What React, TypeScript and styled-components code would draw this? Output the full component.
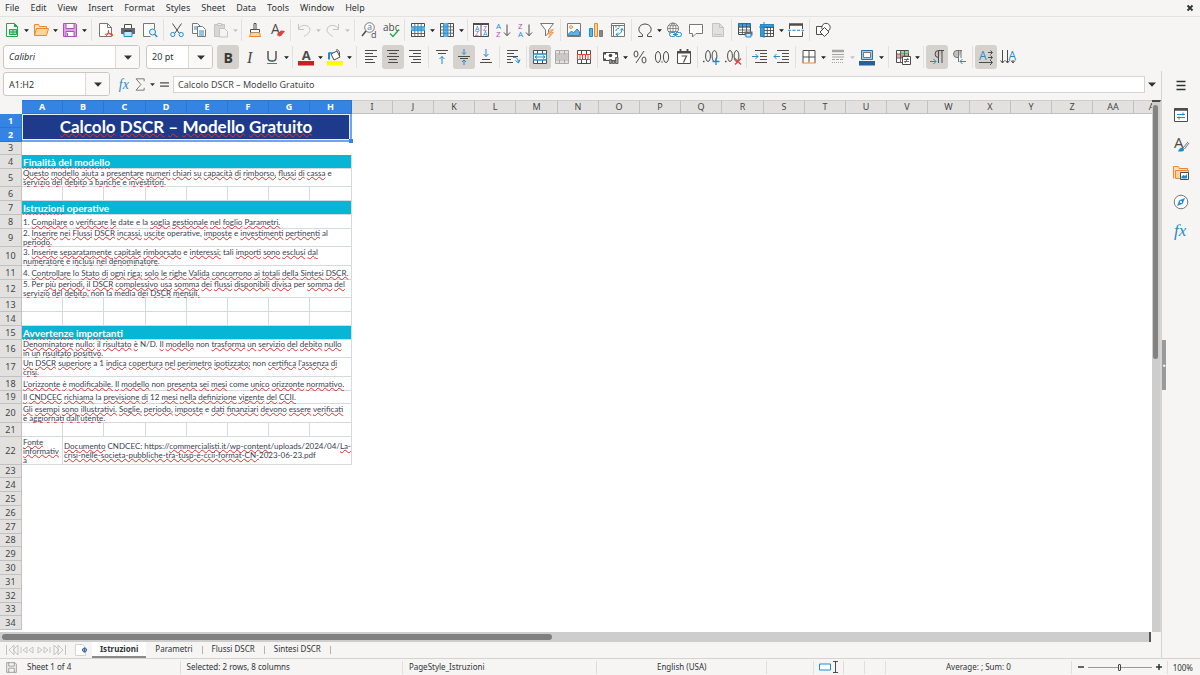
import React from "react";
import styled, { createGlobalStyle, css } from "styled-components";

const BLUE = "#1e8bcd";
const INK = "#4d4c4a";
const GREY = "#797774";
const PALE = "#c4c3c1";
const ORANGE = "#ed8733";
const RED = "#e0403e";
const GREEN = "#18ab50";
const PURPLE = "#b04fbe";

const Global = createGlobalStyle`
  *, *::before, *::after { box-sizing: border-box; }
  body { margin: 0; background: #f6f5f4; }
  button, select, input { font: inherit; color: inherit; margin: 0; padding: 0; }
`;

const Window = styled.div`
  display: flex;
  flex-direction: column;
  height: 100vh;
  overflow: hidden;
  background: #f6f5f4;
  color: #2e3436;
  font: 9px/16px "Noto Sans", sans-serif;
`;

/* ---------- menu bar ---------- */
const MenuBar = styled.nav`
  display: flex;
  flex: none;
  gap: 1px;
  height: 17px;
  padding: 0 6px 0 0;
  border-bottom: 1px solid #e4e3e1;
`;
const MenuItem = styled.button`
  padding: 0 5px;
  border: 0;
  background: none;
  line-height: 16px;
`;
const CloseButton = styled.button`
  display: flex;
  align-items: center;
  margin-left: auto;
  border: 0;
  background: none;
`;

/* ---------- toolbars ---------- */
const Toolbar = styled.div`
  display: flex;
  flex: none;
  align-items: center;
  height: 26px;
  padding: 0 1px;
`;
const ToolButton = styled.button<{ $on?: boolean }>`
  display: flex;
  flex: none;
  align-items: center;
  justify-content: center;
  width: 22px;
  height: 24px;
  border: 0;
  border-radius: 3px;
  background: ${(p) => (p.$on ? "#d5d1cd" : "none")};
`;
const DropButton = styled.button<{ $dim?: boolean }>`
  display: flex;
  flex: none;
  align-items: center;
  justify-content: center;
  width: 7px;
  height: 24px;
  border: 0;
  background: none;
  color: ${(p) => (p.$dim ? PALE : "#1c1c1c")};
`;
const Separator = styled.span<{ $wide?: boolean }>`
  flex: none;
  width: 1px;
  height: 22px;
  margin: 0 ${(p) => (p.$wide ? 3 : 2)}px;
  background: #e3e1df;
`;
const Combo = styled.div<{ $w: number }>`
  display: flex;
  flex: none;
  align-items: center;
  width: ${(p) => p.$w}px;
  height: 24px;
  border: 1px solid #cdc7c2;
  border-radius: 3px;
  background: #fff;
  overflow: hidden;
`;
const ComboSelect = styled.select<{ $italic?: boolean }>`
  flex: 1;
  min-width: 0;
  height: 22px;
  padding: 0 0 0 5px;
  border: 0;
  appearance: none;
  background: none;
  line-height: 22px;
  font-style: ${(p) => (p.$italic ? "italic" : "normal")};
`;
const ComboInput = styled.input`
  flex: 1;
  min-width: 0;
  height: 22px;
  padding: 0 0 0 5px;
  border: 0;
  background: none;
`;
const ComboArrow = styled.span`
  display: flex;
  align-items: center;
  justify-content: center;
  width: 24px;
  height: 22px;
  border-left: 1px solid #dcd8d4;
  background: #faf9f8;
`;
const FormatBar = styled(Toolbar)`
  height: 28px;
  padding: 0 3px;
`;
const ComboGroup = styled.div`
  display: flex;
  gap: 6px;
  padding-right: 4px;
`;

/* ---------- body ---------- */
const Body = styled.div`
  display: flex;
  flex: 1;
  min-height: 0;
`;
const Main = styled.main`
  display: flex;
  flex: 1;
  flex-direction: column;
  min-width: 0;
`;
const FormulaBar = styled.div`
  display: flex;
  flex: none;
  align-items: center;
  height: 29px;
  padding: 0 5px 3px 3px;
`;
const FormulaTools = styled.div`
  display: flex;
  align-items: center;
  gap: 3px;
  padding: 0 2px 0 8px;
`;
const PlainButton = styled.button`
  display: flex;
  align-items: center;
  justify-content: center;
  border: 0;
  background: none;
`;
const FormulaInput = styled.input`
  flex: 1;
  min-width: 0;
  height: 17px;
  margin-right: 3px;
  padding: 0 4px;
  border: 1px solid #d6d3d0;
  background: #fff;
  color: #444;
`;

const SheetArea = styled.div`
  display: flex;
  flex: 1;
  min-height: 0;
`;
const SheetViewport = styled.div`
  flex: 1;
  min-width: 0;
  overflow: hidden;
  background: #fff;
`;
const Sheet = styled.table`
  table-layout: fixed;
  width: 1176px;
  border-spacing: 0;
  border-collapse: separate;
`;
const headCell = css<{ $on?: boolean }>`
  padding: 0;
  overflow: hidden;
  text-align: center;
  font-weight: ${(p) => (p.$on ? 700 : 400)};
  font-size: 9px;
  background: ${(p) => (p.$on ? "#3584e4" : "#e2e1e0")};
  color: ${(p) => (p.$on ? "#fff" : "#444")};
  border-right: 1px solid ${(p) => (p.$on ? "#2c76d0" : "#c2c1c0")};
  border-bottom: 1px solid ${(p) => (p.$on ? "#2c76d0" : "#c2c1c0")};
`;
const ColHead = styled.th`
  ${headCell}
  height: 14px;
  line-height: 12px;
  border-top: 1px solid ${(p: { $on?: boolean }) => (p.$on ? "#2c76d0" : "#cfcecd")};
`;
const RowHead = styled.th`
  ${headCell}
  line-height: 12px;
`;
const Corner = styled.td`
  padding: 0;
  background: #f6f5f4;
`;
const Row = styled.tr<{ $h: number }>`
  height: ${(p) => p.$h}px;
`;
/* grid lines are inset shadows so that they take no room from the text */
const Cell = styled.td`
  padding: 0 0 0 1px;
  overflow: hidden;
  vertical-align: middle;
  white-space: pre;
  font: 8px/9px Lato, sans-serif;
  color: #374151;
  box-shadow: inset -1px -1px #d6d9de;
`;
const SectionCell = styled(Cell)`
  background: #06b6d4;
  color: #fff;
  font: 700 10px/13px Lato, sans-serif;
`;
const TitleCell = styled.td`
  position: relative;
  padding: 0;
  text-align: center;
  background: #1e3a8a;
  color: #fff;
  font: 700 17px/22px Lato, sans-serif;
  border-right: 2px solid #6ea6ec;
  border-bottom: 2px solid #6ea6ec;
  box-shadow: inset 0 0 0 1px #e8f0fc;
`;
const FillHandle = styled.span`
  position: absolute;
  right: -3px;
  bottom: -3px;
  width: 4px;
  height: 4px;
  background: #3584e4;
`;
const Misspelt = styled.span`
  text-decoration: underline wavy #e0302e 1px;
  text-underline-offset: 0;
  text-decoration-skip-ink: none;
`;

const VScroll = styled.div`
  flex: none;
  width: 9px;
  padding: 1px 2px 0 1px;
  background: #cdcdcd;
  border-top: 2px solid #4a4a4a;
  border-right: 1px solid #d8d6d4;
`;
const VThumb = styled.div`
  height: 48%;
  margin-top: 2px;
  border-radius: 3px;
  background: #828282;
`;
const HScroll = styled.div`
  flex: none;
  height: 10px;
  margin-right: 10px;
  padding: 2px;
  background: #cdcdcd;
  border-right: 2px solid #555;
`;
const HThumb = styled.div`
  width: 48%;
  height: 6px;
  border-radius: 3px;
  background: #7f7f7f;
`;
const TabBar = styled.div`
  display: flex;
  flex: none;
  align-items: center;
  height: 16px;
  padding-left: 6px;
  font-size: 8px;
`;
const AddSheet = styled(PlainButton)`
  margin: 0 4px 0 8px;
`;
const Tab = styled.button<{ $on?: boolean }>`
  height: 16px;
  padding: 0 ${(p) => (p.$on ? 8 : 9)}px;
  border: 0;
  border-bottom: 2px solid ${(p) => (p.$on ? "#8a8a8a" : "transparent")};
  background: ${(p) => (p.$on ? "#fff" : "none")};
  font-weight: ${(p) => (p.$on ? 700 : 400)};
  line-height: 14px;
`;
const TabDivider = styled.span`
  width: 1px;
  height: 8px;
  background: #b5b3b1;
`;

/* ---------- sidebar ---------- */
const SideBar = styled.aside`
  display: flex;
  flex: none;
  width: 39px;
  border-left: 1px solid #d5d3d1;
`;
const SideHandle = styled.button`
  align-self: center;
  width: 4px;
  height: 50px;
  border: 0;
  background: #9a9a9a;
  color: #fff;
  font-size: 5px;
  line-height: 50px;
`;
const SideTabs = styled.div`
  display: flex;
  flex: 1;
  flex-direction: column;
  align-items: center;
  gap: 13px;
  padding: 7px 4px 0 0;
`;

/* ---------- status bar ---------- */
const StatusBar = styled.footer`
  display: flex;
  flex: none;
  align-items: center;
  height: 17px;
  border-top: 1px solid #d5d3d1;
  font-size: 8px;
`;
const StatusCell = styled.div<{ $grow: number; $center?: boolean }>`
  display: flex;
  align-items: center;
  gap: 10px;
  justify-content: ${(p) => (p.$center ? "center" : "flex-start")};
  flex: ${(p) => p.$grow} 1 0;
  min-width: 0;
  height: 13px;
  padding-left: ${(p) => (p.$center ? 0 : 6)}px;
  border-right: 1px solid #e0dedc;
  white-space: nowrap;
`;
const ZoomControls = styled.div`
  display: flex;
  align-items: center;
  gap: 3px;
  padding: 0 7px 0 5px;
`;
const ZoomSlider = styled.input`
  width: 64px;
  height: 12px;
  appearance: none;
  background: linear-gradient(#9a9996, #9a9996) center / 100% 1px no-repeat;
  &::-webkit-slider-thumb {
    appearance: none;
    width: 3px;
    height: 7px;
    border: 1px solid #444;
    border-radius: 1px;
    background: #f6f5f4;
  }
`;
const ZoomValue = styled.span`
  margin-left: 1px;
  padding-left: 5px;
  border-left: 1px solid #e0dedc;
  line-height: 13px;
`;

/* ---------- icons ---------- */
const Svg = styled.svg`
  display: block;
  flex: none;
  fill: none;
  stroke: ${INK};
  stroke-width: 1;
  overflow: visible;
`;
const Icon = ({ children, size = 16 }: { children: React.ReactNode; size?: number }) => (
  <Svg width={size} height={size} viewBox="0 0 16 16" aria-hidden="true">
    {children}
  </Svg>
);
const Caret = ({ big }: { big?: boolean }) => (
  <Svg width={big ? 8 : 5} height={big ? 5 : 3} viewBox="0 0 8 5" aria-hidden="true">
    <path d="M0 0.5h8L4 4.8z" fill="currentColor" stroke="none" />
  </Svg>
);
const T = (p: { x: number; y: number; s: number; c: string; b?: boolean; serif?: boolean; i?: boolean; children: string }) => (
  <text
    x={p.x}
    y={p.y}
    fontSize={p.s}
    fill={p.c}
    stroke="none"
    fontWeight={p.b ? 700 : 400}
    fontStyle={p.i ? "italic" : "normal"}
    fontFamily={p.serif ? '"Liberation Serif", serif' : '"Open Sans", sans-serif'}
  >
    {p.children}
  </text>
);
const page = "M1.5 1.5h8l4 4v9h-12z";

const icons: Record<string, React.ReactNode> = {
  new: (
    <>
      <path d="M2.500 1.500h8l3 3v10h-11z" fill="#fff" stroke={GREEN} />
      <path d="M10 1l4 4h-4z" fill={GREEN} stroke="none" />
      <path d="M5.500 7.500h7v5h-7zM5.500 10h7M9 7.500v5" fill="#a9e0bb" stroke={GREEN} />
    </>
  ),
  open: (
    <>
      <path d="M1.500 13.500v-11h4l1 2h7v2" fill="#fbe3bd" stroke={ORANGE} />
      <path d="M3.500 6.500h12l-2 7h-12z" fill="#fbd69b" stroke={ORANGE} />
    </>
  ),
  save: (
    <>
      <path d="M1.500 1.500h12l1 1v12h-13z" fill="#dd9fe6" stroke={PURPLE} />
      <path d="M4 1.500h8v5H4z" fill="#fff" stroke={PURPLE} />
      <path d="M4 9.500h8v5H4z" fill="#fff" stroke={PURPLE} />
      <path d="M5.500 11v3" stroke={PURPLE} />
    </>
  ),
  pdf: (
    <>
      <path d={page} fill="#fff" stroke={GREY} />
      <path d="M9.500 1.500v4h4" stroke={GREY} />
      <path d="M7 15c3-2 4-6 3.500-7M7 12.500c2-1 6-1 8 0M10 9c.5 2 3 4 5 5" stroke={RED} />
    </>
  ),
  print: (
    <>
      <path d="M4.500 6V2.500h7V6" fill="#fff" />
      <path d="M1 6h14v6H1z" fill="#6a6967" stroke="none" />
      <path d="M4 9.500h8v5H4z" fill="#cfe5f5" stroke={BLUE} />
      <path d="M4 9h8" stroke="#333" />
    </>
  ),
  preview: (
    <>
      <path d="M12.500 7V1.500h-11v13h7" fill="#fff" stroke={GREY} />
      <circle cx="10.500" cy="10" r="3" fill="#e5f2fb" stroke={BLUE} />
      <path d="M12.700 12.300l2.500 2.700" stroke={BLUE} strokeWidth="1.400" />
    </>
  ),
  cut: (
    <>
      <path d="M3.500 1.500l6.500 9.500M12.500 1.500l-6.500 9.500" />
      <circle cx="3.800" cy="12.500" r="2.100" stroke={BLUE} />
      <circle cx="12.200" cy="12.500" r="2.100" stroke={BLUE} />
    </>
  ),
  copy: (
    <>
      <path d="M8 11.500H1.500v-10h5l3 3" fill="#fff" stroke={GREY} />
      <path d="M6.500 4.500h5l3 3v7h-8z" fill="#fff" stroke={GREY} />
      <path d="M3 5h3M3 7h3M8 9h5M8 11h5M8 13h5" stroke={BLUE} />
    </>
  ),
  paste: (
    <>
      <path d="M1.500 2.500h10v12h-10z" fill="#d8d7d5" stroke={PALE} />
      <path d="M4.500 1.500h4v2h-4z" fill="#eee" stroke={PALE} />
      <path d="M6.500 6.500h5l3 3v5.500h-8z" fill="#f4f4f3" stroke={PALE} />
    </>
  ),
  brush: (
    <>
      <path d="M7 1.500h2v6H7z" fill="#fff" />
      <path d="M3.500 7.500h9v3h-9z" fill="#fff" />
      <path d="M4 10.500l-1.500 4h11l-1-4" fill="#fbd69b" stroke={ORANGE} />
    </>
  ),
  clear: (
    <>
      <T x={2} y={12} s={14} c={INK}>A</T>
      <path d="M8 12l4-3.500 4 .5-4 5H9z" fill={RED} stroke="none" />
      <path d="M8 13l3 2" stroke="#f4a3a2" />
    </>
  ),
  undo: <path d="M2.500 2v5.500h5.500M2.500 7.500c1-5 10.500-6 11.500 0 .3 2.500-2 4.500-6 7" stroke={PALE} />,
  redo: <path d="M13.500 2v5.500H8M13.500 7.500C12.500 2.500 3 1.500 2 7.500c-.3 2.500 2 4.500 6 7" stroke={PALE} />,
  find: (
    <>
      <circle cx="8.500" cy="5.500" r="4.800" fill="#fff" stroke={GREY} />
      <T x={6} y={8} s={9} c={BLUE}>a</T>
      <path d="M5 9L1 14" strokeWidth="1.500" />
      <T x={10} y={15.500} s={9} c={INK}>d</T>
    </>
  ),
  spell: (
    <>
      <T x={0} y={8.500} s={10} c={INK}>abc</T>
      <path d="M7 11.500l3 3 6-7" stroke={GREEN} strokeWidth="1.300" />
    </>
  ),
  row: (
    <>
      <path d="M1.500 1.500h13v13h-13z" fill="#fff" />
      <path d="M4.800 1.500v13M8 1.500v13M11.200 1.500v13M1.500 11.500h13M1.500 14.500h13" strokeWidth=".8" />
      <path d="M1 4.700h14v4h-14z" fill="#63b1e5" stroke="none" />
      <path d="M4.800 4.700v4M8 4.700v4M11.200 4.700v4M1 4.700h14M1 8.700h14" stroke={BLUE} strokeWidth=".8" />
    </>
  ),
  col: (
    <>
      <path d="M1.500 1.500h13v13h-13z" fill="#fff" />
      <path d="M1.500 4.800h13M1.500 8h13M1.500 11.200h13M11.500 1.500v13" strokeWidth=".8" />
      <path d="M4.500 1h4.500v14h-4.500z" fill="#63b1e5" stroke="none" />
      <path d="M4.500 4.800h4.500M4.500 8h4.500M4.500 11.200h4.500M4.500 1v14M9 1v14" stroke={BLUE} strokeWidth=".8" />
    </>
  ),
  sort: (
    <>
      <path d="M.5 1.500h15v13H.5zM8 3v11.500" fill="#fff" />
      <path d="M0 2h16" strokeWidth="2" />
      <T x={2} y={8.500} s={7} c={BLUE}>A</T>
      <T x={2} y={14} s={7} c={PURPLE}>Z</T>
      <T x={10} y={8.500} s={7} c={PURPLE}>Z</T>
      <T x={10} y={14} s={7} c={BLUE}>A</T>
    </>
  ),
  asc: (
    <>
      <T x={1} y={7} s={8} c={BLUE}>A</T>
      <T x={1} y={15} s={8} c={PURPLE}>Z</T>
      <path d="M12 2.500v11M9 10.500l3 3.200 3-3.200" />
    </>
  ),
  desc: (
    <>
      <T x={1} y={7} s={8} c={PURPLE}>Z</T>
      <T x={1} y={15} s={8} c={BLUE}>A</T>
      <path d="M12 2.500v11M9 10.500l3 3.200 3-3.200" />
    </>
  ),
  filter: (
    <>
      <path d="M1.500 1.500h13L9.500 8v3l-3 3V8z" fill="#fff" stroke={GREY} />
      <path d="M11.500 8l-3 4h3l-2 4 5-5.500h-3l3-3z" fill="#fbc780" stroke={ORANGE} strokeWidth=".7" />
    </>
  ),
  image: (
    <>
      <path d="M1.500 1.500h13v13h-13z" fill="#fff" stroke={GREY} />
      <circle cx="5" cy="5" r="1.400" stroke={ORANGE} />
      <path d="M2.500 13.500V12l3-3 2 2 3.500-4 2.500 3v3.500z" fill="#63b1e5" stroke={BLUE} />
    </>
  ),
  chart: (
    <>
      <path d="M1.500 6.500h3v8h-3z" fill="#63b1e5" stroke={BLUE} />
      <path d="M6.500 1.500h3v13h-3z" fill="#fbd69b" stroke={ORANGE} />
      <path d="M11.500 8.500h3v6h-3z" fill="#8a8987" stroke={GREY} />
    </>
  ),
  pivot: (
    <>
      <path d="M1.500 1.500h13v13h-13z" fill="#fff" stroke={GREY} />
      <path d="M2 3.500h12M3.500 4v10M6 3.500v2M9 3.500v2" stroke={GREY} />
      <path d="M6 12.500c4 0 6-2 6-6M6 12.500l2-2M6 12.500l2 1.500M12 6.500l-2 2M12 6.500l1.500 2M6 9c0-2 1-2.500 3-2.500" stroke={BLUE} />
    </>
  ),
  omega: <path d="M1 14.500h4.500v-2C-1 9 2 2 8 2s9 7 2.500 10.500v2H15" />,
  link: (
    <>
      <circle cx="7" cy="6.500" r="5.500" fill="#fff" stroke={GREY} />
      <path d="M7 1v11M1.500 6.500h11M2.500 3.700h9M2.500 9.500h9M7 1c-4 3-4 8 0 11M7 1c4 3 4 8 0 11" stroke={GREY} strokeWidth=".8" />
      <rect x="3.500" y="10.500" width="6" height="4" rx="2" fill="#fff" stroke={BLUE} />
      <rect x="9.500" y="10.500" width="6" height="4" rx="2" fill="#fff" stroke={BLUE} />
      <path d="M7 12.500h5" stroke={BLUE} />
    </>
  ),
  comment: <path d="M1.500 2.500h13v9H8l-3.500 3.500v-3.500h-3z" fill="#fff" stroke={GREY} />,
  header: (
    <>
      <path d="M2.500 1.500h7l4 4v9h-11z" fill="#e1e0de" stroke={PALE} />
      <path d="M9.500 1.500v4h4" stroke={PALE} />
      <path d="M4 12.500h8" stroke={PALE} />
    </>
  ),
  area: (
    <>
      <path d="M1.500 1.500h12v11h-12z" fill="#fff" />
      <path d="M2 2h11v3H2z" fill="#4ea3dc" stroke={BLUE} />
      <path d="M1.500 5h12M1.500 8h12M1.500 10.500h12M5.500 1.500v11M9.500 1.500v11" strokeWidth=".8" />
      <path d="M7.500 9.500h8v4h-8z" fill="#6a6967" stroke="none" />
      <path d="M9 11.500h5v3.500H9z" fill="#cfe5f5" stroke={BLUE} />
    </>
  ),
  freeze: (
    <>
      <path d="M1.500 2.500h13v12h-13z" fill="#fff" />
      <path d="M1.500 2.500h13v2.500h-13zM1.500 5h3.500v9.500h-3.500z" fill="#3f9ad9" stroke={BLUE} />
      <path d="M5 5.500h9.500M5 8.500h9.500M5 11.500h9.500M8.300 5v9.500M11.500 5v9.500" strokeWidth=".9" />
      <path d="M5 0v16M0 5h3" stroke={BLUE} />
    </>
  ),
  split: (
    <>
      <path d="M1.500 7V2.500h13V7M1.500 9.500v5h13v-5" fill="#fff" />
      <path d="M1 2.500h14" strokeWidth="2.500" />
      <path d="M0 8.300h16" stroke={BLUE} strokeDasharray="3 1.500" />
    </>
  ),
  shapes: (
    <>
      <path d="M1.500 4.500h8v8h-8z" fill="#fff" />
      <circle cx="11" cy="5.500" r="4.200" fill="#fff" />
      <path d="M9.500 5.500l4.500 4.500-4.500 4.500-4.500-4.500z" fill="#fff" />
    </>
  ),
  bold: <T x={3.500} y={13.500} s={14} c="#3a3a38" b>B</T>,
  italic: <T x={5} y={13.500} s={16} c={INK} serif i>I</T>,
  underline: (
    <>
      <path d="M4 2v7c0 4 8 4 8 0V2" strokeWidth="1.400" />
      <path d="M3 14.500h10" stroke={BLUE} />
    </>
  ),
  fontcolor: (
    <>
      <T x={3.800} y={10.500} s={13} c={INK} b>A</T>
      <path d="M0 12h16v4.500H0z" fill="#cc1f1f" stroke="none" />
    </>
  ),
  fill: (
    <>
      <path d="M4 5l6-3 3 6-6 3z" fill="#fff" />
      <path d="M2 3.500v7" stroke={BLUE} strokeWidth="2" />
      <path d="M2 4h4" stroke={BLUE} strokeWidth="1.500" />
      <path d="M9 1c2-1 4 1 3.500 6" />
      <path d="M0 12h16v4.500H0z" fill="#ffff00" stroke="none" />
    </>
  ),
  left: <path d="M2 1.500h12M2 4.500h8M2 7.500h12M2 10.500h8M2 13.500h10" />,
  center: <path d="M2 1.500h12M4 4.500h8M2 7.500h12M4 10.500h8M3 13.500h10" />,
  right: <path d="M2 1.500h12M6 4.500h8M2 7.500h12M6 10.500h8M4 13.500h10" />,
  top: (
    <>
      <path d="M2 1.500h12M4 4.500h8" />
      <path d="M8 15V7.500M5.500 10L8 7.500l2.500 2.500" stroke={BLUE} />
    </>
  ),
  middle: (
    <>
      <path d="M2 7.500h12M4 9.500h8" />
      <path d="M8 0v5M6 3.500L8 5.500l2-2M8 16v-5M6 13l2-2 2 2" stroke={BLUE} />
    </>
  ),
  bottom: (
    <>
      <path d="M2 13.500h12M4 10.500h8" />
      <path d="M8 0v7.500M5.500 5L8 7.500l2.500-2.500" stroke={BLUE} />
    </>
  ),
  wrap: (
    <>
      <path d="M2 1.500h11M2 4.500h7M2 7.500h11M2 10.500h4M2 13.500h6" />
      <path d="M8 8.500c3-.5 5 .5 5.500 5M10.500 11.500l3 2.500 1.500-3.500" stroke={BLUE} />
    </>
  ),
  merge: (
    <>
      <path d="M1.500 1.500h13v13h-13zM5.500 1.500v13M10.500 1.500v13" fill="#fff" />
      <path d="M1.500 5h13v6h-13z" fill="#fff" stroke={BLUE} />
      <path d="M3 8h10M5 6.500L3 8l2 1.500M11 6.500L13 8l-2 1.500M1.500 5h13M1.500 11h13" stroke={BLUE} />
    </>
  ),
  mergeDim: (
    <>
      <path d="M1.500 1.500h13v13h-13zM1.500 5h13M1.500 11h13M5.500 1.500v13M10.500 1.500v13" fill="#e3e2e0" stroke="#aaa9a7" />
      <path d="M2 5.500h12v5H2z" fill="#c9c8c6" stroke="none" />
    </>
  ),
  unmerge: (
    <>
      <path d="M1.500 1.500h13v13h-13zM5.500 1.500v13M10.500 1.500v13" fill="#fff" />
      <path d="M1.500 5.500h13v5h-13zM4 5.500v5M6.500 5.500v5M9.500 5.500v5M12 5.500v5" fill="#fff" stroke={RED} />
    </>
  ),
  currency: (
    <>
      <path d="M.5 3.500h14v8H.5z" fill="#fff" />
      <path d="M1 4h2v1.500H1zM12 4h2v1.500h-2zM1 9.500h2V11H1z" fill={INK} stroke="none" />
      <circle cx="7.500" cy="6.500" r="1.800" fill={INK} stroke="none" />
      <path d="M6.500 10.500h2v4h-2zM9.500 11.500h2v3h-2zM12.500 8.500h2.500v6h-2.500z" fill="#a5a4a2" strokeWidth=".8" />
    </>
  ),
  percent: (
    <>
      <ellipse cx="4" cy="5" rx="2" ry="3" />
      <ellipse cx="12" cy="11" rx="2" ry="3" />
      <path d="M12 2L4 14" />
    </>
  ),
  number: (
    <>
      <ellipse cx="4" cy="8" rx="2.600" ry="5.500" />
      <ellipse cx="12" cy="8" rx="2.600" ry="5.500" />
      <path d="M7.500 13h1" strokeWidth="1.500" />
    </>
  ),
  date: (
    <>
      <path d="M1.500 2.500h13v12h-13z" fill="#fff" />
      <path d="M1 3.500h14M4.500 0v3M11.500 0v3" strokeWidth="1.800" />
      <path d="M5.500 7h5l-3 6.500" strokeWidth="1.200" />
    </>
  ),
  addDec: (
    <>
      <path d="M0 12.500h1.500" strokeWidth="1.500" />
      <ellipse cx="5" cy="7" rx="2.400" ry="5.500" />
      <ellipse cx="11.500" cy="7" rx="2.400" ry="5.500" />
      <path d="M13 9v7M9.500 12.500h7" stroke={BLUE} strokeWidth="1.300" />
    </>
  ),
  delDec: (
    <>
      <path d="M0 12.500h1.500" strokeWidth="1.500" />
      <ellipse cx="5" cy="7" rx="2.400" ry="5.500" />
      <ellipse cx="11.500" cy="7" rx="2.400" ry="5.500" />
      <path d="M10 9.500l6 6M16 9.500l-6 6" stroke={RED} strokeWidth="1.300" />
    </>
  ),
  indent: (
    <>
      <path d="M3 1.500h12M8 4.500h7M8 7.500h7M8 10.500h7M3 13.500h12" />
      <path d="M0 7.500h6M3.500 5L6 7.500 3.500 10" stroke={BLUE} />
    </>
  ),
  outdent: (
    <>
      <path d="M3 1.500h12M8 4.500h7M8 7.500h7M8 10.500h7M3 13.500h12" />
      <path d="M0 7.500h6M2.500 5L0 7.500 2.500 10" stroke={BLUE} />
    </>
  ),
  border: (
    <>
      <path d="M2 14V1.500h12V14M8 1.500v12M2 8h12" fill="#fff" />
      <path d="M1.500 14h13" stroke={ORANGE} />
    </>
  ),
  borderStyle: (
    <>
      <path d="M2 2h12" stroke="#a5a4a2" strokeWidth="2.500" />
      <path d="M2 5.500h12M2 8h12" stroke="#a5a4a2" />
      <path d="M2 10.500h12" stroke="#a5a4a2" strokeDasharray="3 1" />
      <path d="M2 13.500h12" stroke="#a5a4a2" strokeDasharray="1 1" />
    </>
  ),
  borderColor: (
    <>
      <path d="M2.500 1.500h11v9h-11z" fill="#9fcdec" stroke="#2a6fae" />
      <path d="M4.500 3.500h7v5h-7z" fill="#fff" stroke={GREY} />
      <path d="M0 12h16v4.500H0z" fill="#2a6099" stroke="none" />
    </>
  ),
  conditional: (
    <>
      <path d="M1.500 1.500h12v12h-12z" fill="#fff" />
      <path d="M5.500 2h8v3h-8z" fill="#8fd6a6" stroke="none" />
      <path d="M2 5h4v4H2z" fill="#f2a6a5" stroke="none" />
      <path d="M6 6h7v3H6z" fill="#ec7a78" stroke="none" />
      <path d="M1.500 5h12M1.500 9h12M5.500 1.500v12M9.500 1.500v6" strokeWidth=".8" />
      <path d="M7.500 7.500h8v8h-8z" fill="#fff" />
      <path d="M9 10.500h5M9 12.500h5M13 9l-3 5" strokeWidth=".8" />
    </>
  ),
  ltr: (
    <>
      <path d="M15 1.500H9.500a3.500 3.500 0 0 0 0 7M9.500 1.500V14M13 1.500V14" fill="#c2c0bd" />
      <path d="M1 12.500h6M4.500 10L7 12.500 4.500 15" stroke={BLUE} />
    </>
  ),
  rtl: (
    <>
      <path d="M11 1.500H6a3.500 3.500 0 0 0 0 7h1.500M7.500 1.500V13M10 1.500V9" fill="#c2c0bd" stroke={GREY} />
      <path d="M9 12.500h6M11.500 10L9 12.500l2.500 2.500" stroke={BLUE} />
    </>
  ),
  horizontal: (
    <>
      <T x={1} y={10.500} s={12} c={BLUE}>A</T>
      <path d="M10 3.500h4M12.500 1.500l2 2-2 2M10 8.500h4M12.500 6.500l2 2-2 2M1 13.500h13M12 11l2.500 2.500L12 16" />
    </>
  ),
  vertical: (
    <>
      <path d="M2.500 1v13M.5 11.500l2 2.500 2-2.500M7.500 1v13M5.500 11.500l2 2.500 2-2.500M13 11v3M11 11.500l2 2.500 2-2.500" />
      <T x={8.500} y={10.500} s={12} c={BLUE}>A</T>
    </>
  ),
  menu: <path d="M3.500 3.500h9M3.500 7.500h9M3.500 11.500h9" stroke="#2e3436" strokeWidth="1.600" />,
  properties: (
    <>
      <path d="M1.500 1.500h13v13h-13z" fill="#fff" />
      <path d="M1 2.500h14" strokeWidth="2.500" />
      <path d="M4 7.500h8M10 5.500v3M4 10.500h8M6 9.500v3" stroke={BLUE} />
    </>
  ),
  styles: (
    <>
      <T x={1} y={11.500} s={15} c={INK}>A</T>
      <path d="M15 6l-5 6M16 7l-4.500 6" stroke={GREY} />
      <path d="M5 15.500c1-3 3-4.500 5-3.500s1 3-1 3.500z" fill={BLUE} stroke="none" />
    </>
  ),
  gallery: (
    <>
      <path d="M.5 13.500v-12h5l1 2h8v3" fill="#fbe3bd" stroke={ORANGE} />
      <path d="M2.500 5.500h13l-1 8h-12z" fill="#fbd69b" stroke={ORANGE} />
      <path d="M7.500 7.500h8v7h-8z" fill="#fff" />
      <path d="M8.500 13.500v-2l2-1.500 1.500 1 2-2v4.500z" fill={BLUE} stroke="none" />
    </>
  ),
  navigator: (
    <>
      <circle cx="8" cy="8" r="6.800" fill="#fff" stroke={GREY} />
      <path d="M11.500 4.500L9.500 9.500 4.500 11.500l2-5z" fill={BLUE} stroke={BLUE} strokeWidth=".6" />
      <circle cx="8" cy="8" r="1.100" fill="#fff" stroke="none" />
    </>
  ),
  functions: <T x={1} y={13} s={17} c={BLUE} serif i>fx</T>,
  sum: <path d="M12.500 4V1H2.500L8.500 8l-6 7h10v-3" stroke={GREY} strokeWidth="1.200" />,
  equals: <path d="M2.500 6h11M2.500 10h11" strokeWidth="1.800" />,
};

/* "|" and "||" are narrow and wide separators, "v" a drop-down arrow ("v-" disabled), "*" a pressed button */
const Tools = ({ items }: { items: string[] }) => (
  <>
    {items.map((it, i) => {
      if (it === "|" || it === "||") return <Separator key={i} $wide={it === "||"} />;
      if (it[0] === "v" && it.length <= 2)
        return (
          <DropButton key={i} $dim={it === "v-"} aria-label="More options">
            <Caret />
          </DropButton>
        );
      const on = it[0] === "*";
      const name = on ? it.slice(1) : it;
      return (
        <ToolButton key={i} $on={on} aria-label={name} aria-pressed={on}>
          <Icon>{icons[name]}</Icon>
        </ToolButton>
      );
    })}
  </>
);

const standard =
  "new v open v save v || pdf print preview | cut copy paste v- | brush clear | undo v- redo v- || find spell | row v col v | sort asc desc filter | image chart pivot | omega v link comment header | area freeze v split | shapes".split(" ");
const formatting =
  "*bold italic underline v | fontcolor v fill v || left *center right | top *middle bottom | wrap | *merge mergeDim unmerge | currency v percent number date | addDec delDec | indent outdent | border v borderStyle v- borderColor v || conditional v | *ltr rtl | *horizontal vertical".split(" ");

/* ---------- sheet content ---------- */
const known = new Set(
  "a e o la lo non come media date per in al tali operative N/D. CNDCEC: 1 12 1. 2. 3. 4. 5.".split(" ")
);
const isKnown = (w: string) => known.has(w) || known.has(w.toLowerCase()) || known.has(w.replace(/,$/, ""));
const Spelled = ({ text }: { text: string }) => (
  <>
    {text.split(/(\s+)/).map((w, i) => (!w.trim() || isKnown(w) ? w : <Misspelt key={i}>{w}</Misspelt>))}
  </>
);

type RowData = { h: number; kind: "title" | "grid" | "blank" | "section" | "text" | "source"; text?: string };
const rows: RowData[] = [
  { h: 14, kind: "title", text: "Calcolo DSCR – Modello Gratuito" },
  { h: 14, kind: "blank" },
  { h: 13, kind: "blank" },
  { h: 14, kind: "section", text: "Finalità del modello" },
  { h: 18, kind: "text", text: "Questo modello aiuta a presentare numeri chiari su capacità di rimborso, flussi di cassa e\nservizio del debito a banche e investitori." },
  { h: 14, kind: "grid" },
  { h: 14, kind: "section", text: "Istruzioni operative" },
  { h: 14, kind: "text", text: "1. Compilare o verificare le date e la soglia gestionale nel foglio Parametri." },
  { h: 18, kind: "text", text: "2. Inserire nei Flussi DSCR incassi, uscite operative, imposte e investimenti pertinenti al\nperiodo." },
  { h: 19, kind: "text", text: "3. Inserire separatamente capitale rimborsato e interessi; tali importi sono esclusi dal\nnumeratore e inclusi nel denominatore." },
  { h: 14, kind: "text", text: "4. Controllare lo Stato di ogni riga; solo le righe Valida concorrono ai totali della Sintesi DSCR." },
  { h: 18, kind: "text", text: "5. Per più periodi, il DSCR complessivo usa somma dei flussi disponibili divisa per somma del\nservizio del debito, non la media dei DSCR mensili." },
  { h: 14, kind: "grid" },
  { h: 14, kind: "grid" },
  { h: 14, kind: "section", text: "Avvertenze importanti" },
  { h: 18, kind: "text", text: "Denominatore nullo: il risultato è N/D. Il modello non trasforma un servizio del debito nullo\nin un risultato positivo." },
  { h: 19, kind: "text", text: "Un DSCR superiore a 1 indica copertura nel perimetro ipotizzato; non certifica l’assenza di\ncrisi." },
  { h: 14, kind: "text", text: "L’orizzonte è modificabile. Il modello non presenta sei mesi come unico orizzonte normativo." },
  { h: 13, kind: "text", text: "Il CNDCEC richiama la previsione di 12 mesi nella definizione vigente del CCII." },
  { h: 19, kind: "text", text: "Gli esempi sono illustrativi. Soglie, periodo, imposte e dati finanziari devono essere verificati\ne aggiornati dall’utente." },
  { h: 14, kind: "grid" },
  { h: 28, kind: "source" },
  ...[13, 14, 14, 14, 14, 13, 14, 14, 14, 14, 13, 14].map((h) => ({ h, kind: "blank" as const })),
];
const columns = "A B C D E F G H I J K L M N O P Q R S T U V W X Y Z AA AB".split(" ");

const RowCells = ({ row }: { row: RowData }) => {
  if (row.kind === "title")
    return (
      <TitleCell colSpan={8} rowSpan={2}>
        <Spelled text={row.text!} />
        <FillHandle />
      </TitleCell>
    );
  if (row.kind === "section")
    return (
      <SectionCell colSpan={8}>
        <Spelled text={row.text!} />
      </SectionCell>
    );
  if (row.kind === "text")
    return (
      <Cell colSpan={8}>
        <Spelled text={row.text!} />
      </Cell>
    );
  if (row.kind === "source")
    return (
      <>
        <Cell>
          <Spelled text={"Fonte\ninformativ\na"} />
        </Cell>
        <Cell colSpan={7}>
          <Misspelt>Documento</Misspelt> CNDCEC: https://<Misspelt>commercialisti.it/wp-content</Misspelt>
          {"/uploads/2024/04/"}
          <Misspelt>La-</Misspelt>
          {"\n"}
          <Misspelt>crisi-nelle-societa-pubbliche-tra-tusp-e-ccii-format-CN-</Misspelt>2023-06-23.pdf
        </Cell>
      </>
    );
  if (row.kind === "grid")
    return (
      <>
        {columns.slice(0, 8).map((c) => (
          <Cell key={c} />
        ))}
      </>
    );
  return null;
};

export default function App() {
  return (
    <Window>
      <Global />
      <MenuBar>
        {["File", "Edit", "View", "Insert", "Format", "Styles", "Sheet", "Data", "Tools", "Window", "Help"].map((m) => (
          <MenuItem key={m}>{m}</MenuItem>
        ))}
        <CloseButton aria-label="Close document">
          <Svg width="8" height="8" viewBox="0 0 8 8">
            <path d="M1.500 1.500l5 5M6.500 1.500l-5 5" stroke="#2e3436" strokeWidth="1.800" />
          </Svg>
        </CloseButton>
      </MenuBar>
      <Toolbar>
        <Tools items={standard} />
      </Toolbar>
      <FormatBar>
        <ComboGroup>
          <Combo $w={137}>
            <ComboSelect $italic aria-label="Font name">
              <option>Calibri</option>
            </ComboSelect>
            <ComboArrow>
              <Caret big />
            </ComboArrow>
          </Combo>
          <Combo $w={67}>
            <ComboSelect aria-label="Font size">
              <option>20 pt</option>
            </ComboSelect>
            <ComboArrow>
              <Caret big />
            </ComboArrow>
          </Combo>
        </ComboGroup>
        <Tools items={formatting} />
      </FormatBar>
      <Body>
        <Main>
          <FormulaBar>
            <Combo $w={107}>
              <ComboInput aria-label="Name box" defaultValue="A1:H2" />
              <ComboArrow>
                <Caret big />
              </ComboArrow>
            </Combo>
            <FormulaTools>
              <PlainButton aria-label="Function wizard">
                <Icon size={13}>{icons.functions}</Icon>
              </PlainButton>
              <PlainButton aria-label="Sum">
                <Icon size={13}>{icons.sum}</Icon>
              </PlainButton>
              <PlainButton aria-label="Select function">
                <Caret />
              </PlainButton>
              <PlainButton aria-label="Formula">
                <Icon size={13}>{icons.equals}</Icon>
              </PlainButton>
            </FormulaTools>
            <FormulaInput aria-label="Input line" defaultValue="Calcolo DSCR – Modello Gratuito" />
            <PlainButton aria-label="Expand formula bar">
              <Caret big />
            </PlainButton>
          </FormulaBar>
          <SheetArea>
            <SheetViewport>
              <Sheet>
                <colgroup>
                  <col width={22} />
                  {columns.map((c, i) => (
                    <col key={c} width={i % 5 === 2 ? 42 : 41} />
                  ))}
                </colgroup>
                <thead>
                  <tr>
                    <Corner />
                    {columns.map((c, i) => (
                      <ColHead key={c} scope="col" $on={i < 8}>
                        {c}
                      </ColHead>
                    ))}
                  </tr>
                </thead>
                <tbody>
                  {rows.map((row, i) => (
                    <Row key={i} $h={row.h}>
                      <RowHead scope="row" $on={i < 2}>
                        {i + 1}
                      </RowHead>
                      <RowCells row={row} />
                    </Row>
                  ))}
                </tbody>
              </Sheet>
            </SheetViewport>
            <VScroll>
              <VThumb />
            </VScroll>
          </SheetArea>
          <HScroll>
            <HThumb />
          </HScroll>
          <TabBar>
            <Svg width="60" height="12" viewBox="0 0 60 12" aria-hidden="true">
              <path
                stroke={PALE}
                d="M.5 1v10M8 1L3 6l5 5zM12 1L7 6l5 5zM15 3v6M21 3l-4 3 4 3zM27 3l-4 3 4 3zM32 3l4 3-4 3zM38 3l4 3-4 3zM44 3v6M48 1l5 5-5 5zM52 1l5 5-5 5zM59.500 1v10"
              />
            </Svg>
            <AddSheet aria-label="Add sheet">
              <Svg width="14" height="14" viewBox="0 0 14 14">
                <path d="M1.500 1.500h7l3 3v8h-10z" fill="#fff" stroke="#d5d3d1" />
                <circle cx="10.500" cy="7" r="2" fill="#fff" stroke="#2a6099" />
                <path d="M10.500 4.500v5M8 7h5" stroke="#2a6099" strokeWidth=".8" />
              </Svg>
            </AddSheet>
            <Tab $on>Istruzioni</Tab>
            <Tab>Parametri</Tab>
            <TabDivider />
            <Tab>Flussi DSCR</Tab>
            <TabDivider />
            <Tab>Sintesi DSCR</Tab>
            <TabDivider />
          </TabBar>
        </Main>
        <SideBar>
          <SideHandle aria-label="Hide sidebar">●</SideHandle>
          <SideTabs>
            {["menu", "properties", "styles", "gallery", "navigator", "functions"].map((n) => (
              <PlainButton key={n} aria-label={n}>
                <Icon>{icons[n]}</Icon>
              </PlainButton>
            ))}
          </SideTabs>
        </SideBar>
      </Body>
      <StatusBar>
        <StatusCell $grow={175}>
          <Svg width="11" height="11" viewBox="0 0 16 16">
            <path d="M1 1h12l2 2v12H1zM4 1v5h8V1M4 15V9h8v6" stroke={GREY} />
          </Svg>
          Sheet 1 of 4
        </StatusCell>
        <StatusCell $grow={217}>Selected: 2 rows, 8 columns</StatusCell>
        <StatusCell $grow={189}>PageStyle_Istruzioni</StatusCell>
        <StatusCell $grow={170} $center>
          English (USA)
        </StatusCell>
        <StatusCell $grow={46} $center />
        <StatusCell $grow={30} $center>
          <Svg width="20" height="12" viewBox="0 0 20 12">
            <path d="M.5 3h11v6H.5z" fill="#fff" stroke={BLUE} />
            <path d="M16.500 1v10M14 .5h5M14 11.500h5" />
          </Svg>
        </StatusCell>
        <StatusCell $grow={20} $center />
        <StatusCell $grow={20} $center />
        <StatusCell $grow={186} $center>
          Average: ; Sum: 0
        </StatusCell>
        <ZoomControls>
          <PlainButton aria-label="Zoom out">
            <Svg width="8" height="8" viewBox="0 0 8 8">
              <path d="M1 4h6" stroke="#2e3436" strokeWidth="1.500" />
            </Svg>
          </PlainButton>
          <ZoomSlider type="range" aria-label="Zoom" defaultValue={50} />
          <PlainButton aria-label="Zoom in">
            <Svg width="8" height="8" viewBox="0 0 8 8">
              <path d="M1 4h6M4 1v6" stroke="#2e3436" strokeWidth="1.500" />
            </Svg>
          </PlainButton>
          <ZoomValue>100%</ZoomValue>
        </ZoomControls>
      </StatusBar>
    </Window>
  );
}
